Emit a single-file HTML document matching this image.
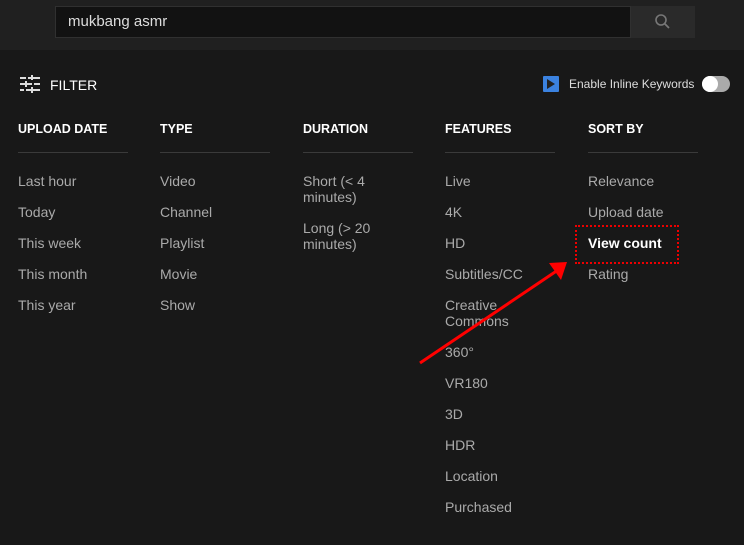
<!DOCTYPE html>
<html><head><style>
*{margin:0;padding:0;box-sizing:border-box}
body{width:744px;height:545px;background:#181818;font-family:"Liberation Sans",Arial,sans-serif;position:relative;overflow:hidden}
.top{position:absolute;left:0;top:0;width:744px;height:50px;background:#202020}
.search{position:absolute;left:55px;top:6px;width:576px;height:32px;background:#121212;border:1px solid #303030;color:#ddd;font-size:15px;padding:6px 12px}
.btn{position:absolute;left:631px;top:6px;width:64px;height:32px;background:#2a2a2a}
.t{position:absolute;white-space:nowrap}
.h{color:#fff;font-weight:bold;font-size:12.5px;top:122px}
.line{position:absolute;top:152px;height:1px;width:110px;background:#3a3a3a}
.i{color:#aaa;font-size:14px;line-height:16px}
</style></head><body>
<div class="top"></div>
<div class="search">mukbang asmr</div>
<div class="btn"><svg width="64" height="32"><circle cx="30" cy="14" r="5" fill="none" stroke="#777" stroke-width="1.6"/><line x1="34" y1="18" x2="38" y2="22" stroke="#777" stroke-width="1.8"/></svg></div>
<svg class="t" style="left:20px;top:75px" width="20" height="18"><g stroke="#ddd" stroke-width="2"><line x1="0" y1="3" x2="20" y2="3"/><line x1="0" y1="9" x2="20" y2="9"/><line x1="0" y1="15" x2="20" y2="15"/></g><g fill="#181818"><rect x="6" y="1" width="2" height="4"/><rect x="12" y="7" width="2" height="4"/><rect x="4" y="13" width="2" height="4"/></g><g stroke="#ddd" stroke-width="2"><line x1="12" y1="0" x2="12" y2="5"/><line x1="6" y1="6" x2="6" y2="12"/><line x1="12" y1="12" x2="12" y2="18"/></g></svg>
<div class="t" style="left:50px;top:77px;color:#fff;font-size:14px">FILTER</div>
<svg class="t" style="left:543px;top:76px" width="16" height="16"><rect width="16" height="16" rx="1" fill="#3b82e0"/><path d="M4 3 L12 8 L4 13Z" fill="#222"/></svg>
<div class="t" style="left:569px;top:77px;color:#ddd;font-size:12px">Enable Inline Keywords</div>
<div class="t" style="left:702px;top:76px;width:28px;height:16px;border-radius:8px;background:#aaa"></div>
<div class="t" style="left:702px;top:76px;width:16px;height:16px;border-radius:8px;background:#fff"></div>

<div class="t h" style="left:18px">UPLOAD DATE</div><div class="line" style="left:18px"></div>
<div class="t h" style="left:160px">TYPE</div><div class="line" style="left:160px"></div>
<div class="t h" style="left:303px">DURATION</div><div class="line" style="left:303px"></div>
<div class="t h" style="left:445px">FEATURES</div><div class="line" style="left:445px"></div>
<div class="t h" style="left:588px">SORT BY</div><div class="line" style="left:588px"></div>

<div class="t i" style="left:18px;top:173px">Last hour</div>
<div class="t i" style="left:18px;top:204px">Today</div>
<div class="t i" style="left:18px;top:235px">This week</div>
<div class="t i" style="left:18px;top:266px">This month</div>
<div class="t i" style="left:18px;top:297px">This year</div>

<div class="t i" style="left:160px;top:173px">Video</div>
<div class="t i" style="left:160px;top:204px">Channel</div>
<div class="t i" style="left:160px;top:235px">Playlist</div>
<div class="t i" style="left:160px;top:266px">Movie</div>
<div class="t i" style="left:160px;top:297px">Show</div>

<div class="t i" style="left:303px;top:173px">Short (&lt; 4<br>minutes)</div>
<div class="t i" style="left:303px;top:220px">Long (&gt; 20<br>minutes)</div>

<div class="t i" style="left:445px;top:173px">Live</div>
<div class="t i" style="left:445px;top:204px">4K</div>
<div class="t i" style="left:445px;top:235px">HD</div>
<div class="t i" style="left:445px;top:266px">Subtitles/CC</div>
<div class="t i" style="left:445px;top:297px">Creative<br>Commons</div>
<div class="t i" style="left:445px;top:344px">360°</div>
<div class="t i" style="left:445px;top:375px">VR180</div>
<div class="t i" style="left:445px;top:406px">3D</div>
<div class="t i" style="left:445px;top:437px">HDR</div>
<div class="t i" style="left:445px;top:468px">Location</div>
<div class="t i" style="left:445px;top:499px">Purchased</div>

<div class="t i" style="left:588px;top:173px">Relevance</div>
<div class="t i" style="left:588px;top:204px">Upload date</div>
<div class="t i" style="left:588px;top:235px;color:#fff;font-weight:bold">View count</div>
<div class="t i" style="left:588px;top:266px">Rating</div>

<div class="t" style="left:575px;top:225px;width:104px;height:39px;border:2px dotted #e00"></div>
<svg class="t" style="left:0;top:0" width="744" height="545"><line x1="420" y1="363" x2="558" y2="270" stroke="#f00" stroke-width="3"/><path d="M549 263 L567 262 L561 280Z" fill="#f00"/></svg>
</body></html>
